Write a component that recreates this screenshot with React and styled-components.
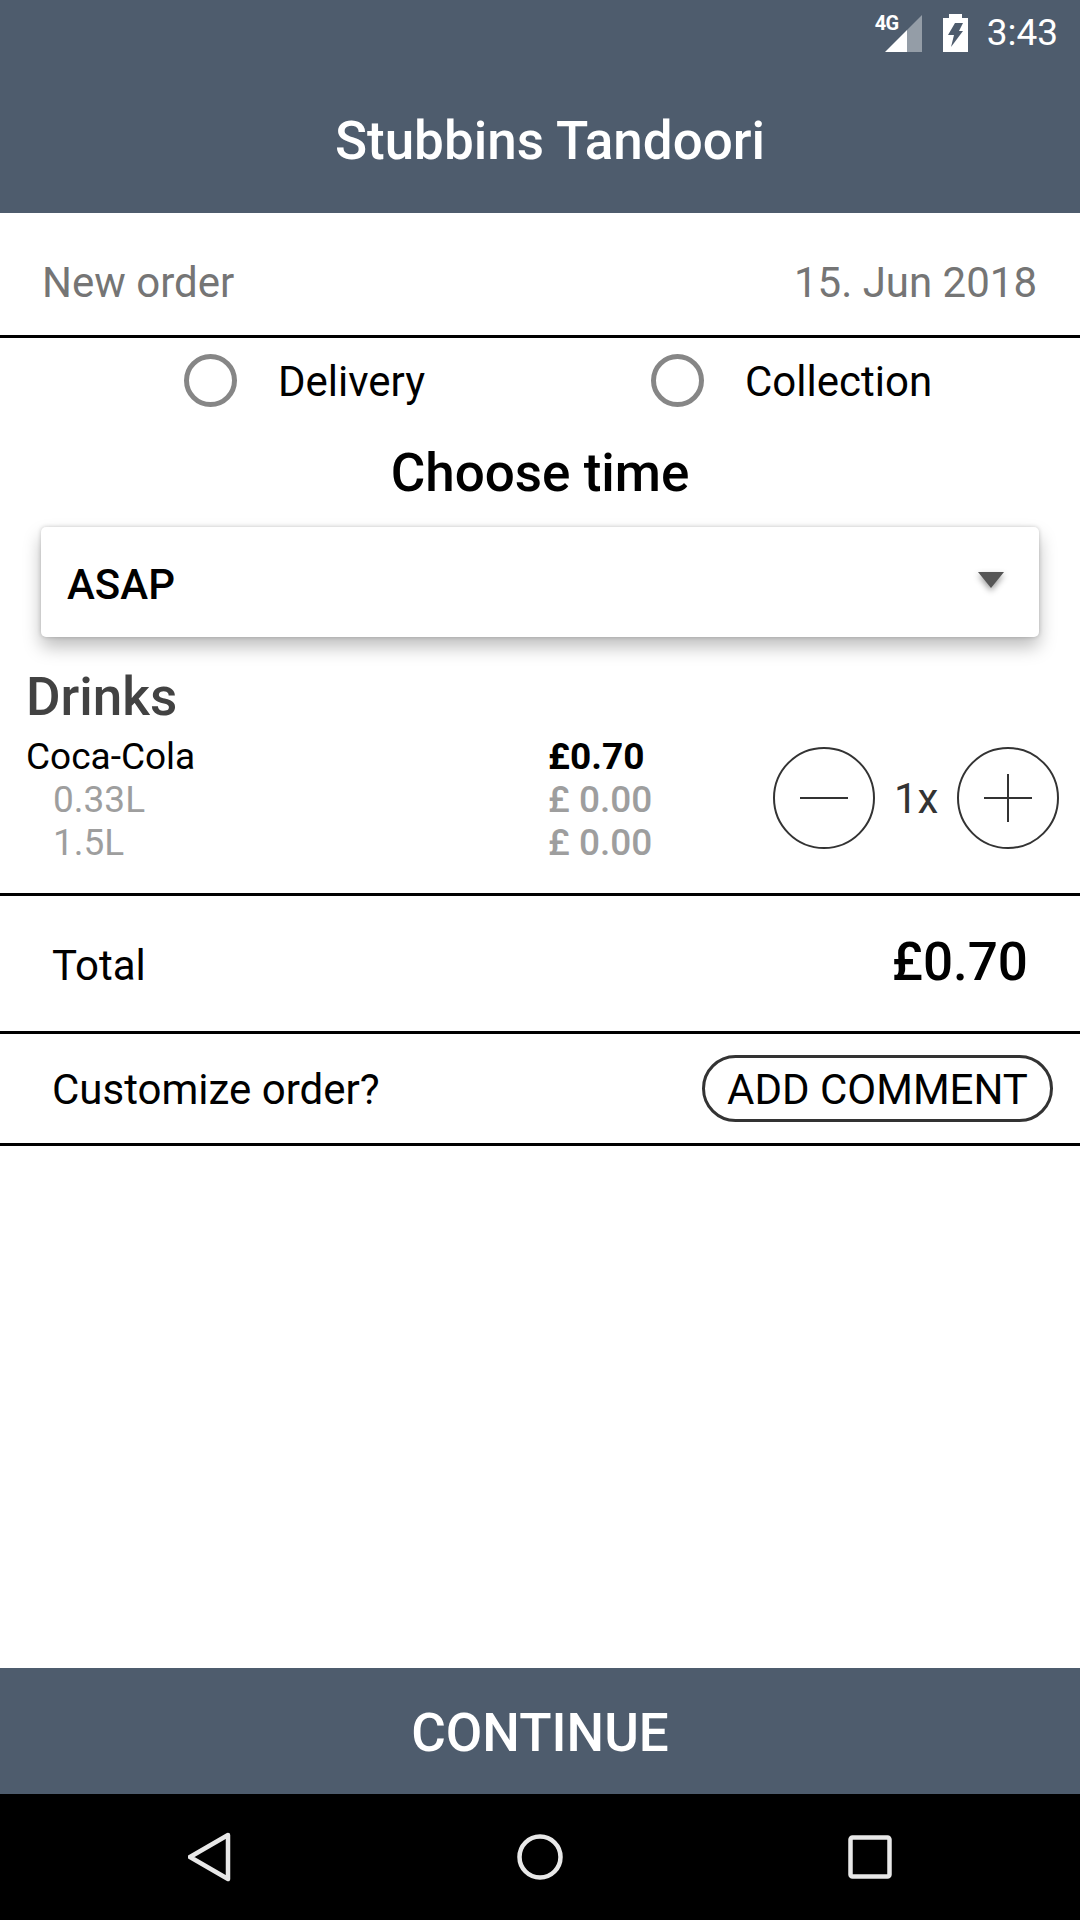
import React from 'react';
import styled, { createGlobalStyle } from 'styled-components';

const GlobalStyle = createGlobalStyle`
  html, body {
    margin: 0;
    padding: 0;
    background: #fff;
  }
  * {
    box-sizing: border-box;
  }
`;

const Screen = styled.div`
  width: 1080px;
  height: 1920px;
  display: flex;
  flex-direction: column;
  font-family: Roboto, "Noto Sans", sans-serif;
  color: #000;
  overflow: hidden;
`;

const Header = styled.header`
  height: 213px;
  background: #4e5c6d;
  color: #fff;
  display: flex;
  flex-direction: column;
`;

const StatusBar = styled.div`
  height: 66px;
  display: flex;
  justify-content: flex-end;
  align-items: center;
  padding-right: 22px;
`;

const SignalWrap = styled.div`
  position: relative;
  width: 46px;
  height: 38px;
  margin-right: 21px;
  margin-top: 1px;
`;

const NetworkLabel = styled.span`
  position: absolute;
  left: -1px;
  top: -2px;
  font-size: 20px;
  line-height: 20px;
  font-weight: 700;
  letter-spacing: -0.6px;
`;

const Clock = styled.span`
  font-size: 37px;
  line-height: 40px;
  margin-left: 19px;
`;

const Title = styled.h1`
  margin: 0;
  padding: 2px 0 0 20px;
  flex: 1;
  display: flex;
  align-items: center;
  justify-content: center;
  font-size: 53px;
  font-weight: 500;
`;

const OrderRow = styled.div`
  height: 125px;
  border-bottom: 3px solid #000;
  display: flex;
  justify-content: space-between;
  align-items: center;
  padding: 16px 43px 0 42px;
  font-size: 42px;
  color: #757575;
`;

const OrderOptions = styled.div`
  height: 84px;
  display: flex;
  align-items: center;
  padding-left: 184px;
`;

const Option = styled.label`
  flex: 0 0 467px;
  display: flex;
  align-items: center;
  gap: 41px;
  font-size: 42px;
`;

const OptionText = styled.span`
  padding-top: 2px;
`;

const Radio = styled.span`
  width: 53px;
  height: 53px;
  border: 5px solid #868686;
  border-radius: 50%;
`;

const SectionTitle = styled.h2`
  margin: 0;
  height: 100px;
  padding-top: 2px;
  display: flex;
  align-items: center;
  justify-content: center;
  font-size: 53px;
  font-weight: 500;
`;

const Select = styled.div`
  margin: 5px 41px 0 41px;
  height: 110px;
  border-radius: 5px;
  background: #fff;
  display: flex;
  justify-content: space-between;
  align-items: center;
  padding: 5px 35px 0 26px;
  font-size: 42px;
  font-weight: 500;
  box-shadow: 0 10px 18px rgba(0, 0, 0, 0.26), 0 0 4px rgba(0, 0, 0, 0.2);
`;

const Caret = styled.span`
  width: 0;
  height: 0;
  margin-top: -10px;
  border-left: 13px solid transparent;
  border-right: 13px solid transparent;
  border-top: 16px solid #555;
  filter: drop-shadow(0 3px 3px rgba(0, 0, 0, 0.4));
`;

const DrinksHeading = styled.h3`
  margin: 31px 0 0;
  padding-left: 26px;
  font-size: 53px;
  line-height: 58px;
  font-weight: 500;
  color: #424242;
`;

const DrinkRow = styled.div`
  height: 170px;
  border-bottom: 3px solid #000;
  padding-left: 26px;
  display: grid;
  grid-template-columns: 522px 225px auto;
  align-items: start;
`;

const Lines = styled.div`
  padding-top: 9px;
  font-size: 37px;
  line-height: 43px;
`;

const Line = styled.div`
  color: ${(p) => (p.$muted ? '#9e9e9e' : '#000')};
  padding-left: ${(p) => (p.$indent ? '27px' : '0')};
  font-weight: ${(p) => p.$weight || 400};
`;

const Stepper = styled.div`
  padding-top: 21px;
  display: flex;
  align-items: center;
  gap: 19px;
  font-size: 42px;
  color: #333;
`;

const RoundButton = styled.button`
  width: 102px;
  height: 102px;
  padding: 0;
  border: 2px solid #333;
  border-radius: 50%;
  background: #fff;
  display: flex;
  align-items: center;
  justify-content: center;
`;

const TotalRow = styled.div`
  height: 138px;
  border-bottom: 3px solid #000;
  display: flex;
  justify-content: space-between;
  align-items: center;
  padding: 4px 52px 0 52px;
  font-size: 42px;
`;

const TotalAmount = styled.span`
  font-size: 53px;
  font-weight: 500;
  margin-top: -8px;
`;

const CommentRow = styled.div`
  height: 112px;
  border-bottom: 3px solid #000;
  display: flex;
  justify-content: space-between;
  align-items: center;
  padding: 0 27px 0 52px;
  font-size: 42px;
`;

const CommentLabel = styled.span`
  padding-top: 2px;
`;

const CommentButton = styled.button`
  height: 67px;
  width: 351px;
  padding: 2px 0 0;
  border: 3px solid #333;
  border-radius: 34px;
  background: #fff;
  color: #000;
  font-family: inherit;
  font-size: 42px;
`;

const Spacer = styled.div`
  flex: 1;
`;

const ContinueBar = styled.button`
  height: 126px;
  border: 0;
  padding: 4px 0 0;
  background: #4e5c6d;
  color: #fff;
  font-family: inherit;
  font-size: 53px;
  font-weight: 500;
`;

const NavBar = styled.nav`
  height: 126px;
  background: #000;
  display: grid;
  grid-template-columns: 232px 331px 329px 1fr;
  align-items: center;
  color: #e8e8e8;
  svg {
    justify-self: end;
  }
`;

const NavGap = styled.span``;

const StepLine = () => (
  <svg width="50" height="50" viewBox="0 0 50 50">
    <path d="M1 25h48" stroke="#333" strokeWidth="2" />
  </svg>
);

const StepPlus = () => (
  <svg width="50" height="50" viewBox="0 0 50 50">
    <path d="M1 25h48M25 1v48" stroke="#333" strokeWidth="2" />
  </svg>
);

export default function App() {
  return (
    <Screen>
      <GlobalStyle />
      <Header>
        <StatusBar>
          <SignalWrap>
            <NetworkLabel>4G</NetworkLabel>
            <svg width="46" height="38" viewBox="0 0 46 38" style={{ display: 'block' }}>
              <path d="M9 37 31 15v22z" fill="#fff" />
              <path d="M31 15 46 0v37H31z" fill="#fff" fillOpacity="0.4" />
            </svg>
          </SignalWrap>
          <svg width="25" height="38" viewBox="0 0 25 38">
            <path d="M6 0h13v4h6v34H0V4h6z" fill="#fff" />
            <path d="M12 9h8l-4 8h4L8 33l3-12H5z" fill="#4e5c6d" />
          </svg>
          <Clock>3:43</Clock>
        </StatusBar>
        <Title>Stubbins Tandoori</Title>
      </Header>

      <OrderRow>
        <span>New order</span>
        <span>15. Jun 2018</span>
      </OrderRow>

      <OrderOptions>
        <Option>
          <Radio />
          <OptionText>Delivery</OptionText>
        </Option>
        <Option>
          <Radio />
          <OptionText>Collection</OptionText>
        </Option>
      </OrderOptions>

      <SectionTitle>Choose time</SectionTitle>

      <Select>
        ASAP
        <Caret />
      </Select>

      <DrinksHeading>Drinks</DrinksHeading>
      <DrinkRow>
        <Lines>
          <Line>Coca-Cola</Line>
          <Line $muted $indent>0.33L</Line>
          <Line $muted $indent>1.5L</Line>
        </Lines>
        <Lines>
          <Line $weight={700}>£0.70</Line>
          <Line $muted $weight={500}>£ 0.00</Line>
          <Line $muted $weight={500}>£ 0.00</Line>
        </Lines>
        <Stepper>
          <RoundButton><StepLine /></RoundButton>
          1x
          <RoundButton><StepPlus /></RoundButton>
        </Stepper>
      </DrinkRow>

      <TotalRow>
        <span>Total</span>
        <TotalAmount>£0.70</TotalAmount>
      </TotalRow>

      <CommentRow>
        <CommentLabel>Customize order?</CommentLabel>
        <CommentButton>ADD COMMENT</CommentButton>
      </CommentRow>

      <Spacer />

      <ContinueBar>CONTINUE</ContinueBar>
      <NavBar>
        <svg width="44" height="50" viewBox="0 0 44 50">
          <path d="M40 3 2 25l38 22z" fill="none" stroke="currentColor" strokeWidth="4.5" strokeLinejoin="round" />
        </svg>
        <svg width="46" height="46" viewBox="0 0 46 46">
          <circle cx="23" cy="23" r="20.5" fill="none" stroke="currentColor" strokeWidth="4.5" />
        </svg>
        <svg width="44" height="44" viewBox="0 0 44 44">
          <rect x="2.5" y="2.5" width="39" height="39" rx="2" fill="none" stroke="currentColor" strokeWidth="4.5" />
        </svg>
        <NavGap />
      </NavBar>
    </Screen>
  );
}
